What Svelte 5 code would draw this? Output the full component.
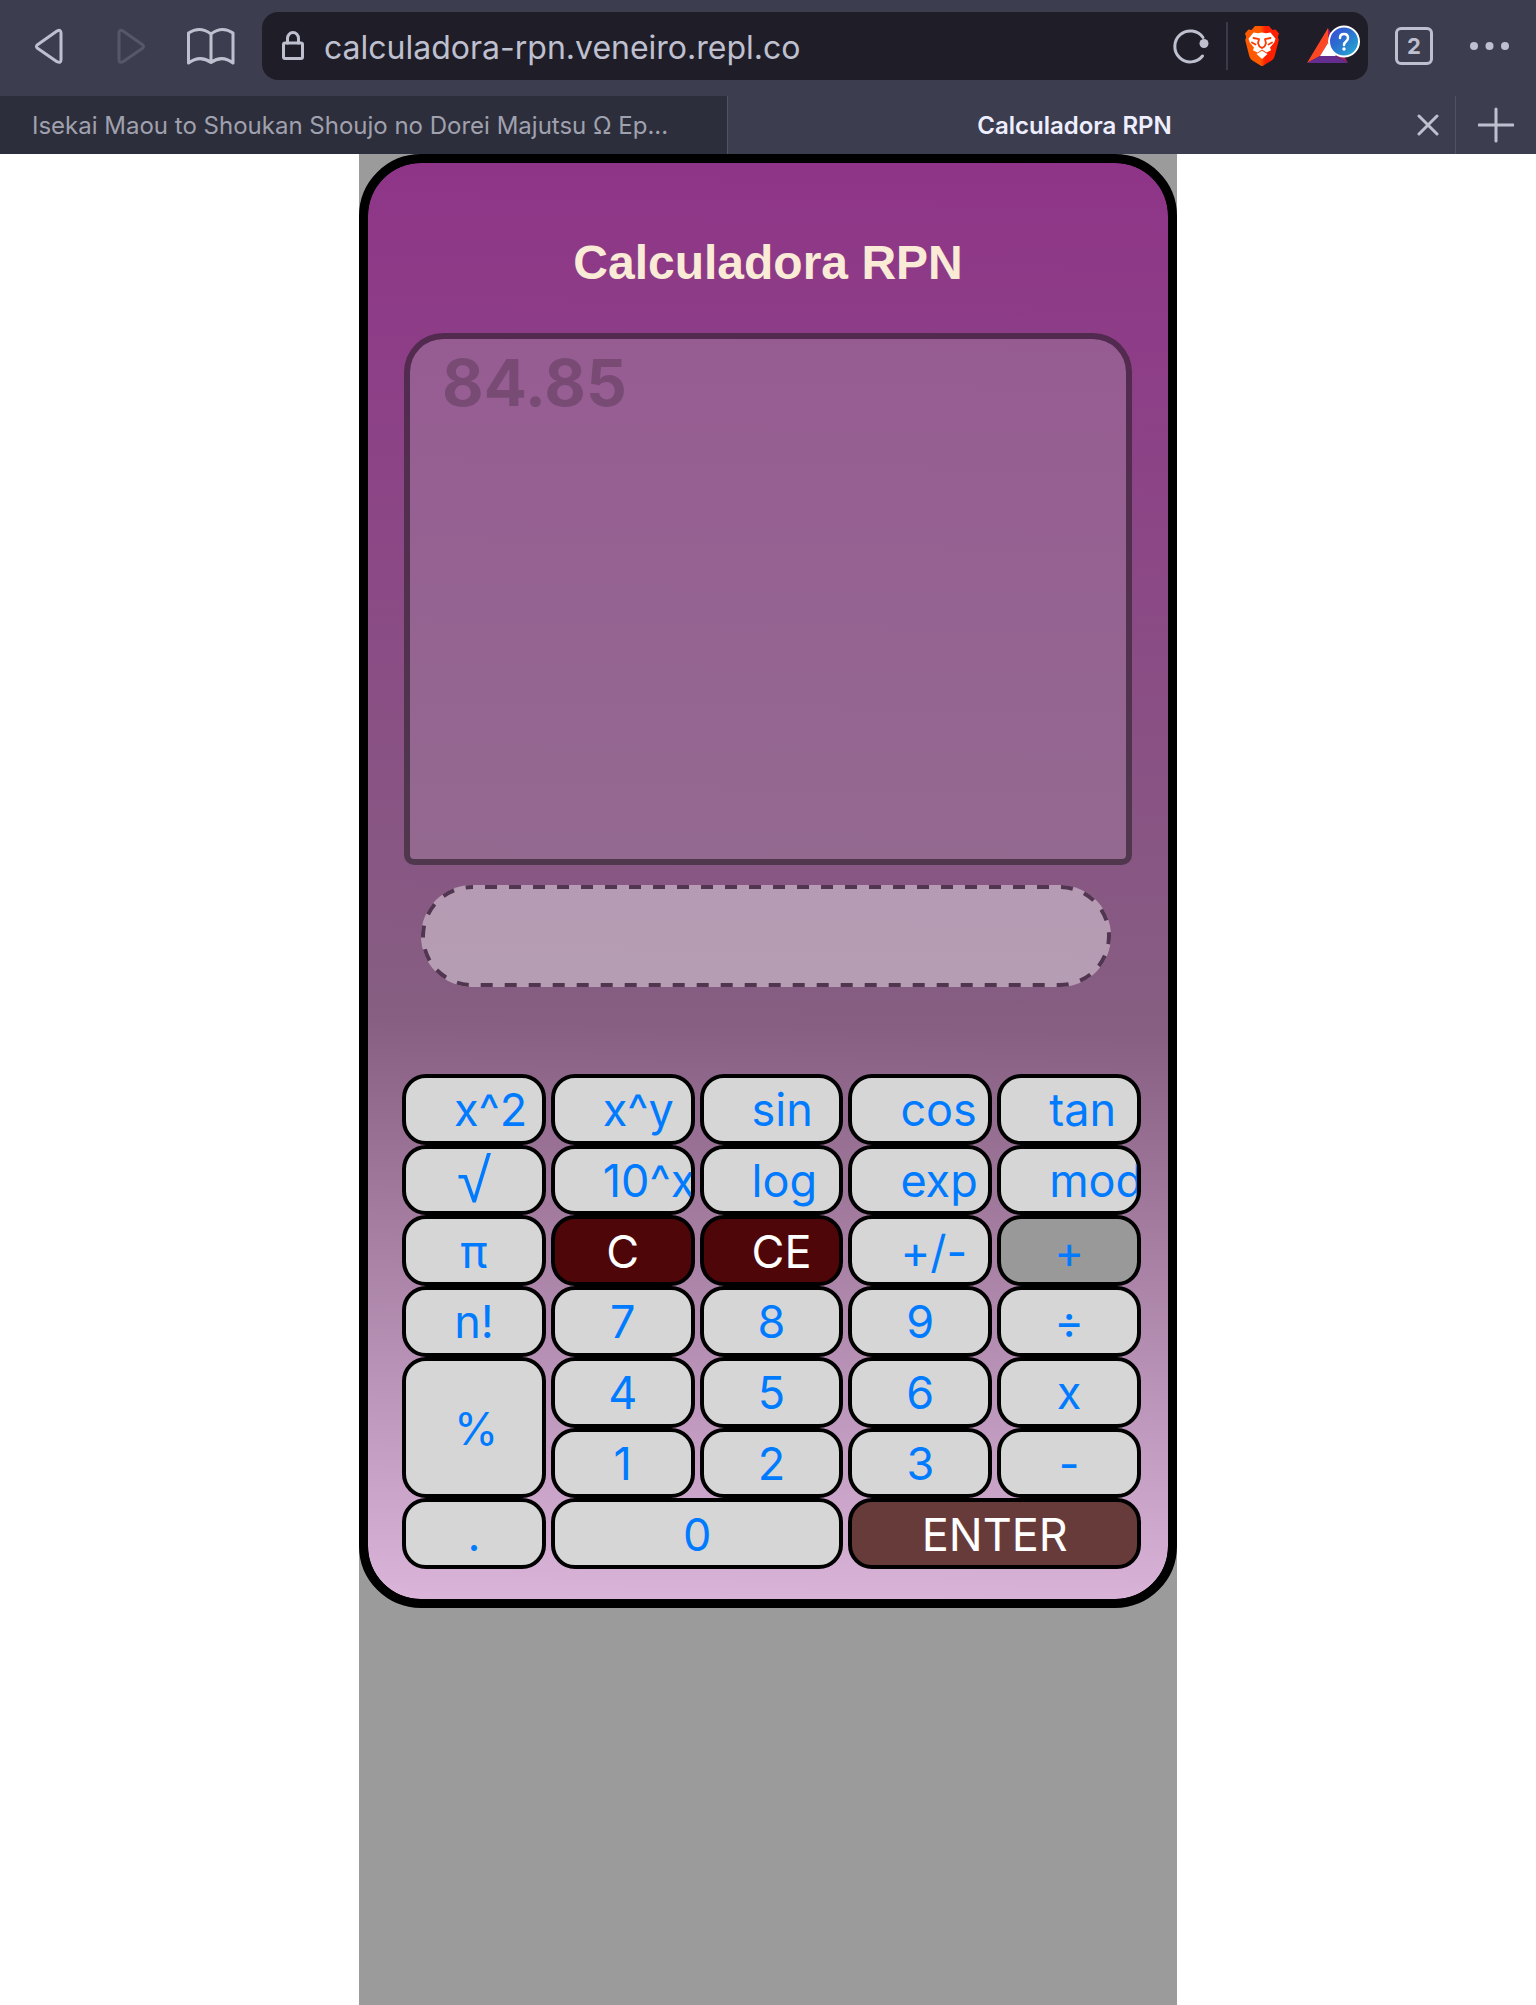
<script>
  let address = $state('calculadora-rpn.veneiro.repl.co');
  let entry = $state('');
  const stack = [84.85];

  const keys = [
    { label: 'x^2' }, { label: 'x^y' }, { label: 'sin' }, { label: 'cos' }, { label: 'tan' },
    { label: '√', kind: 'root' }, { label: '10^x' }, { label: 'log' }, { label: 'exp' }, { label: 'mod' },
    { label: 'π' }, { label: 'C', kind: 'clear' }, { label: 'CE', kind: 'clear' }, { label: '+/-' }, { label: '+', kind: 'pressed' },
    { label: 'n!' }, { label: '7' }, { label: '8' }, { label: '9' }, { label: '÷' },
    { label: '%', kind: 'tall' }, { label: '4' }, { label: '5' }, { label: '6' }, { label: 'x' },
    { label: '1' }, { label: '2' }, { label: '3' }, { label: '-' },
    { label: '.' }, { label: '0', kind: 'wide' }, { label: 'ENTER', kind: 'wide enter' }
  ];

  function press(label) {
    if (/^[0-9.]$/.test(label)) entry += label;
    else if (label === 'C') entry = '';
    else if (label === 'CE') entry = entry.slice(0, -1);
  }
</script>

<header class="browser">
  <nav class="toolbar" aria-label="Browser">
    <div class="nav">
      <button aria-label="Back">
        <svg width="40" height="40" viewBox="0 0 40 40"><path d="M28 5 8.500 18.700q-2.200 1.800 0 3.600L28 35.700q4 2 4-2V7q0-4-4-2Z" /></svg>
      </button>
      <button class="dim" aria-label="Forward" disabled>
        <svg width="40" height="40" viewBox="0 0 40 40"><path d="M13 5 32.500 18.700q2.200 1.800 0 3.600L13 35.700q-4 2-4-2V7q0-4 4-2Z" /></svg>
      </button>
      <button aria-label="Bookmarks">
        <svg width="50" height="40" viewBox="0 0 50 40"><path d="M25 8Q14-.5 2.500 7V37Q14 28.500 25 36.500Q36 28.500 47 37V7Q36-.5 25 8ZM25 8V36.500" /></svg>
      </button>
    </div>

    <div class="address">
      <svg class="lock" width="26" height="32" viewBox="0 0 26 32"><rect x="3.500" y="13" width="19" height="15.500" rx="1.500" /><path d="M7.500 13V8.500a5.500 6 0 0 1 11 0V13" /></svg>
      <input type="text" aria-label="Address" bind:value={address} />
      <button aria-label="Reload">
        <svg width="40" height="40" viewBox="0 0 40 40"><path d="M32 11.500A15.500 15.500 0 1 0 31.500 30" /><circle class="fill" cx="33" cy="17.500" r="4.500" /></svg>
      </button>
      <span class="rule"></span>
      <button class="shield" aria-label="Brave Shields">
        <svg width="36" height="42" viewBox="0 0 36 42">
          <defs>
            <linearGradient id="brave"><stop offset="0.45" stop-color="#ff5a00" /><stop offset="0.6" stop-color="#ff2000" /></linearGradient>
          </defs>
          <path class="plain" fill="url(#brave)" d="M11 1h14l3.500 4 3-.5 3.500 4-1.200 3.500 1 3-4.200 16.500q-.8 2.500-3 4L19.500 40.500q-1.500 1-3 0L8.400 35.500q-2.200-1.500-3-4L1.200 15l1-3L1 8.500l3.500-4 3 .5Z" />
          <path class="plain" fill="#fff" d="m9.500 7.500 4.500.8L18 7.500l4 .8 4.500-.8 5 6.200-1.300 3.800-4.200 5 1 2.800-4.500 2.200L18 24.500l-4.500 3L9 25.300l1-2.800-4.200-5-1.300-3.800Z" />
          <path stroke="#fb3b00" stroke-width="1.800" d="m9.500 13 5.500 1.200-1 4 1.500 3.300M26.500 13 21 14.200l1 4-1.500 3.300M15.500 21.500 18 23l2.500-1.500M8 17.500l3.500 2M28 17.500l-3.500 2" />
          <path class="plain" fill="#fff" d="M18 25.800 23.500 29 18 34l-5.500-5Z" />
        </svg>
      </button>
      <button class="rewards" aria-label="Brave Rewards">
        <svg width="56" height="42" viewBox="0 0 56 42">
          <defs>
            <linearGradient id="badge" y2="1"><stop stop-color="#3949d8" /><stop offset="0.4" stop-color="#2d6bd0" /><stop offset="1" stop-color="#21b5d0" /></linearGradient>
          </defs>
          <path class="plain" fill="#ff4724" d="M23 3v15L15 31 2 38Z" />
          <path class="plain" fill="#9e1f63" d="M23 3 43 38 31 31 23 18Z" />
          <path class="plain" fill="#662d91" d="M15 31h16l12 7H2Z" />
          <path class="plain" fill="#fff" d="M23 18 31 31H15Z" />
          <circle cx="39" cy="16.500" r="15" fill="url(#badge)" stroke="#fff" stroke-width="2" />
          <path stroke="#fff" stroke-width="2.500" d="M35 13q0-4 4-4t4 4q0 2-2 3.500t-2 3.500" />
          <circle class="plain" cx="39" cy="24" r="1.700" fill="#fff" />
        </svg>
      </button>
    </div>

    <button class="count" aria-label="Open tabs"><span>2</span></button>
    <button class="more" aria-label="Menu">
      <svg width="42" height="12" viewBox="0 0 42 12"><circle class="fill" cx="5" cy="6" r="4" /><circle class="fill" cx="20.500" cy="6" r="4" /><circle class="fill" cx="36" cy="6" r="4" /></svg>
    </button>
  </nav>

  <div class="tabs">
    <div class="tab idle"><button class="name">Isekai Maou to Shoukan Shoujo no Dorei Majutsu Ω Ep...</button></div>
    <div class="tab active">
      <button class="name">Calculadora RPN</button>
      <button class="close" aria-label="Close tab">
        <svg width="22" height="22" viewBox="0 0 22 22"><path d="M2 2 20 20M20 2 2 20" /></svg>
      </button>
    </div>
    <button class="add" aria-label="New tab">
      <svg width="36" height="36" viewBox="0 0 36 36"><path d="M18 2v32M1 18h34" /></svg>
    </button>
  </div>
</header>

<main>
  <section class="calculator">
    <h1>Calculadora RPN</h1>
    <output class="display">
      {#each stack as value}<div>{value}</div>{/each}
    </output>
    <div class="entry">
      <svg width="100%" height="102"><rect class="dashes" x="2" y="2" height="98" rx="49" /></svg>
      <input type="text" aria-label="Entry" bind:value={entry} />
    </div>
    <div class="keys">
      {#each keys as key}
        <button class={key.kind} onclick={() => press(key.label)}>{key.label}</button>
      {/each}
    </div>
  </section>
</main>

<style>
  :global(html), :global(body), :global(#app) {
    height: 100%;
  }
  :global(body) {
    margin: 0;
    background: #fff;
  }
  :global(#app) {
    display: flex;
    flex-direction: column;
    font-family: Inter, "Liberation Sans", sans-serif;
  }
  button, input {
    box-sizing: border-box;
    margin: 0;
    padding: 0;
    border: 0;
    background: none;
    color: inherit;
    font: inherit;
  }
  svg {
    display: block;
    fill: none;
    stroke: currentColor;
    stroke-width: 3;
    stroke-linecap: round;
    stroke-linejoin: round;
  }
  .fill {
    fill: currentColor;
    stroke: none;
  }
  .plain {
    stroke: none;
  }

  .browser {
    flex: none;
    background: #3c3e4f;
    color: #bfc0cf;
  }
  .toolbar {
    display: flex;
    align-items: center;
    height: 96px;
    padding: 0 16px 4px 9px;
    box-sizing: border-box;
  }
  .nav {
    display: flex;
    gap: 1px;
    margin-right: 11px;
  }
  .nav button {
    display: grid;
    place-items: center;
    width: 80px;
    height: 68px;
  }
  .nav .dim {
    color: #565767;
  }
  .address {
    flex: 1;
    display: flex;
    align-items: center;
    height: 68px;
    padding: 0 7px 0 18px;
    border-radius: 16px;
    background: #1f1e28;
  }
  .address input {
    flex: 1;
    min-width: 0;
    height: 68px;
    margin-left: 18px;
    padding-top: 2px;
    font-size: 32px;
    outline: none;
  }
  .rule {
    width: 2px;
    height: 48px;
    margin: 0 16px 0 15px;
    background: #3a3b4a;
  }
  .rewards {
    margin-left: 25px;
  }
  .count {
    display: grid;
    place-items: center;
    width: 92px;
  }
  .count span {
    box-sizing: border-box;
    width: 38px;
    height: 38px;
    border: 3px solid currentColor;
    border-radius: 6px;
    font-size: 22px;
    font-weight: 700;
    line-height: 32px;
  }
  .more {
    display: grid;
    place-items: center;
    width: 60px;
  }

  .tabs {
    display: grid;
    grid-template-columns: 1fr 1fr 80px;
    height: 58px;
  }
  .tab {
    min-width: 0;
    display: flex;
    box-sizing: border-box;
    border-right: 1px solid #505263;
    font-size: 24px;
  }
  .name {
    flex: 1;
    min-width: 0;
    overflow: hidden;
    white-space: nowrap;
    text-overflow: ellipsis;
  }
  .idle {
    padding: 0 32px;
    background: #2d2e3b;
    color: #a0a1ae;
  }
  .idle .name {
    text-align: left;
  }
  .active {
    padding-left: 20px;
    color: #eeeeff;
    font-weight: 600;
  }
  .close, .add {
    display: grid;
    place-items: center;
    width: 54px;
    color: #bfc0cf;
  }
  .add {
    width: 80px;
  }

  main {
    flex: 1;
    width: 818px;
    max-width: 100%;
    margin: 0 auto;
    background: #9b9b9b;
  }
  .calculator {
    padding: 54px 27px 30px 34px;
    border: 9px solid #000;
    border-radius: 62px;
    background: linear-gradient(181deg, #8f3488, #865f82 60%, #dbb4da) padding-box, #000;
  }
  h1 {
    margin: 0;
    padding: 16px 7px 16px 0;
    color: #faebd7;
    font: 700 48px/60px "Liberation Sans", Arial, sans-serif;
    text-align: center;
  }
  .display {
    display: block;
    box-sizing: border-box;
    height: 532px;
    margin: 24px 9px 20px 2px;
    padding: 6px 32px;
    border: 6px solid rgba(24, 24, 24, 0.5);
    border-radius: 39px 39px 10px 10px;
    background: rgba(160, 124, 158, 0.5) padding-box;
    color: rgba(0, 0, 0, 0.2);
    font-size: 64px;
    font-weight: 700;
    line-height: 76px;
  }
  .entry {
    display: grid;
    grid-template-columns: minmax(0, 1fr);
    margin: 0 30px 87px 19px;
    border-radius: 51px;
    background: rgba(228, 222, 228, 0.5);
    color: #523551;
  }
  .entry > * {
    grid-area: 1 / 1;
  }
  .dashes {
    width: calc(100% - 4px);
    stroke-width: 4;
    stroke-linecap: butt;
    stroke-dasharray: 12 12;
    stroke-dashoffset: 11;
  }
  .entry input {
    width: 100%;
    padding: 0 36px;
    font-size: 45px;
    outline: none;
  }
  .keys {
    display: grid;
    grid-template-columns: repeat(5, minmax(0, 1fr));
    grid-template-rows: repeat(7, 1fr);
    column-gap: 5px;
    height: 495px;
  }
  .keys button {
    overflow: hidden;
    padding: 2px 48px 0;
    border: 4px solid #000;
    border-radius: 24px;
    background: #d6d6d6;
    color: #007bff;
    font-size: 45px;
    line-height: 56px;
    white-space: nowrap;
  }
  .keys .root {
    font-family: "Liberation Sans", sans-serif;
    font-size: 62px;
  }
  .keys .clear {
    background: #4e0609;
    color: #fff;
  }
  .keys .pressed {
    background: #999;
  }
  .keys .tall {
    grid-row: span 2;
  }
  .keys .wide {
    grid-column: span 2;
  }
  .keys .enter {
    background: #683b3b;
    color: #fff;
  }
</style>
